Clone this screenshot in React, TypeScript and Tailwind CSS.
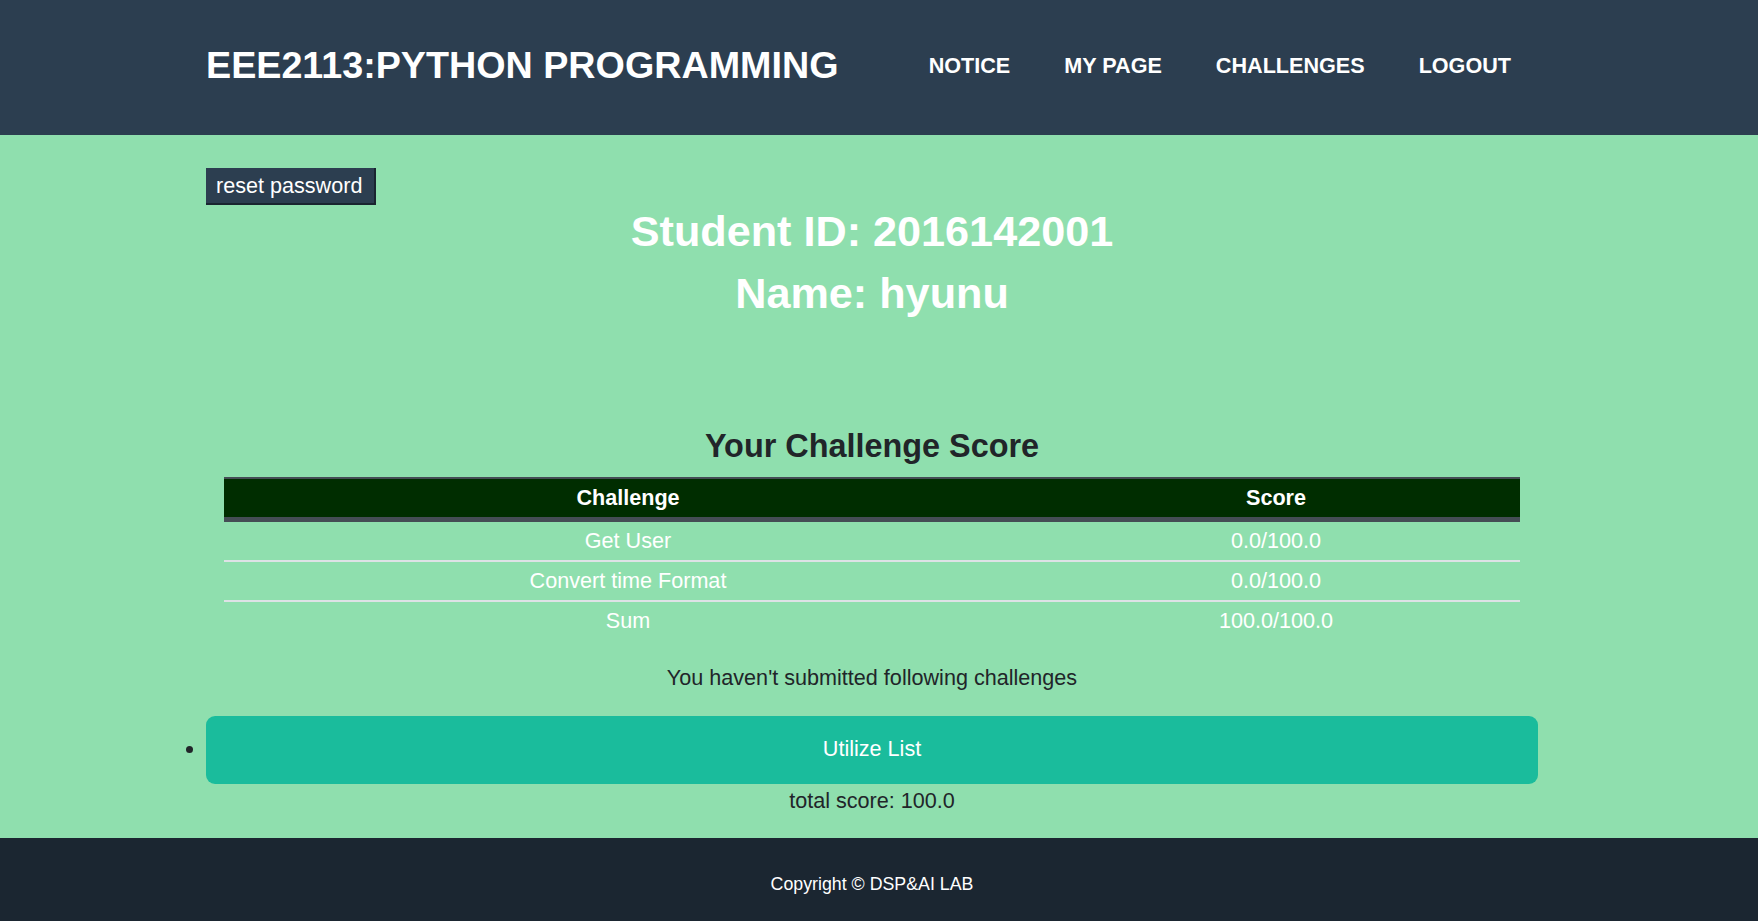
const challenges = [
  { name: "Get User", score: "0.0/100.0" },
  { name: "Convert time Format", score: "0.0/100.0" },
  { name: "Sum", score: "100.0/100.0" },
];

const navItems = ["NOTICE", "MY PAGE", "CHALLENGES", "LOGOUT"];

const App = () => {
  return (
    <div className="min-h-screen flex flex-col font-['Liberation_Sans',Arial,sans-serif] text-[21.6px] text-[#212529]">
      {/* Header */}
      <header className="h-[135px] bg-[#2c3e50] flex items-center pb-[4px] shrink-0">
        <div className="ml-[206px] w-[1332px] flex items-center">
          <h1 className="text-[37.7px] font-bold text-white leading-none">EEE2113:PYTHON PROGRAMMING</h1>
          <nav className="ml-auto flex">
            {navItems.map((item) => (
              <a key={item} className="px-[27px] text-[21.6px] font-bold text-white leading-none">
                {item}
              </a>
            ))}
          </nav>
        </div>
      </header>

      {/* Main */}
      <main className="bg-[#8fdfae] shrink-0">
        <div className="ml-[206px] w-[1332px] pt-[33px] pb-[21px]">
          <button className="bg-[#2c3e50] text-white text-[21.6px] leading-[25px] px-[10px] pt-[5px] pb-[5px] border-r-2 border-b-2 border-[#1a2530] w-[170px] h-[37px] text-left">
            reset password
          </button>

          <div className="text-center text-white font-bold">
            <h2 className="text-[43.2px] leading-[52px] mb-[10px]">Student ID: 2016142001</h2>
            <h2 className="text-[43.2px] leading-[52px]">Name: hyunu</h2>
          </div>

          <h3 className="text-center text-[32.4px] font-bold leading-[39px] mt-[108px] mb-[11px]">Your Challenge Score</h3>

          <table className="mx-[18px] w-[1296px] border-collapse text-center">
            <thead>
              <tr className="bg-[#002d00] text-white">
                <th className="w-[808px] h-[41px] border-t-2 border-b-[5px] border-[#454d55] font-bold leading-[35px]">Challenge</th>
                <th className="h-[41px] border-t-2 border-b-[5px] border-[#454d55] font-bold leading-[35px]">Score</th>
              </tr>
            </thead>
            <tbody className="text-white">
              {challenges.map((c, i) => (
                <tr key={c.name} className={i < challenges.length - 1 ? "border-b-2 border-[#dee2e6]" : ""}>
                  <td className="h-[38px] leading-[38px]">{c.name}</td>
                  <td className="h-[38px] leading-[38px]">{c.score}</td>
                </tr>
              ))}
            </tbody>
          </table>

          <p className="text-center leading-[32px] mt-[22px]">You haven't submitted following challenges</p>

          <ul className="list-disc mt-[22px]">
            <li className="marker:text-[#212529]">
              <a className="flex items-center justify-center h-[68px] rounded-[9px] bg-[#1abc9c] text-white">Utilize List</a>
            </li>
          </ul>

          <p className="text-center leading-[32px] mt-[1px]">total score: 100.0</p>
        </div>
      </main>

      {/* Footer */}
      <footer className="flex-1 bg-[#1b2631] pt-[33px] pb-[34px]">
        <p className="ml-[206px] w-[1332px] text-center text-[17.8px] text-white leading-[26px]">Copyright © DSP&amp;AI LAB</p>
      </footer>
    </div>
  );
};

export default App;
